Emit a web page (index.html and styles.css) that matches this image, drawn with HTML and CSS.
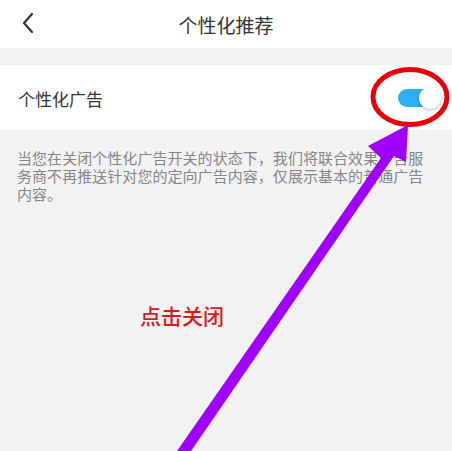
FILE: index.html
```html
<!DOCTYPE html>
<html lang="zh-CN">
<head>
<meta charset="utf-8">
<link rel="stylesheet" href="styles.css">
</head>
<body>
<div class="page">
  <header class="topbar">
    <span class="back">
      <svg width="14" height="22" viewBox="0 0 14 22"><path d="M11 2 L3 11 L11 20" fill="none" stroke="#333" stroke-width="2.2" stroke-linecap="round" stroke-linejoin="round"/></svg>
    </span>
    <h1 class="title">个性化推荐</h1>
  </header>
  <div class="gap"></div>
  <div class="row">
    <span class="label">个性化广告</span>
    <span class="switch"><span class="knob"></span></span>
  </div>
  <p class="desc">当您在关闭个性化广告开关的状态下，我们将联合效果广告服务商不再推送针对您的定向广告内容，仅展示基本的普通广告内容。</p>

  <div class="note">点击关闭</div>
  <svg class="overlay" width="452" height="451" viewBox="0 0 452 451">
    <ellipse cx="410" cy="97" rx="37" ry="27.5" fill="none" stroke="#e8000b" stroke-width="5"/>
    <polygon points="177,451 381,158 368,146 408,125 406,162 394,156 191,451" fill="#a100ff"/>
  </svg>
</div>
</body>
</html>
```

FILE: styles.css
```css
* { box-sizing: border-box; }
html, body { margin: 0; padding: 0; }
body {
  width: 452px;
  height: 451px;
  overflow: hidden;
  background: #f2f2f2;
  font-family: "Noto Sans CJK SC", "Noto Sans", sans-serif;
}
.page {
  position: relative;
  width: 452px;
  height: 451px;
}
.topbar {
  height: 48px;
  background: #fff;
  display: flex;
  align-items: center;
  justify-content: center;
  position: relative;
}
.back {
  position: absolute;
  left: 21px;
  top: 12px;
  display: flex;
}
.title {
  margin: 0;
  font-size: 19px;
  font-weight: 400;
  color: #333;
  line-height: 1;
}
.gap { height: 17px; }
.row {
  height: 65px;
  background: #fff;
  display: flex;
  align-items: center;
  justify-content: space-between;
  padding: 0 14px 0 18px;
}
.label {
  font-size: 17px;
  color: #333;
  margin-top: 2px;
}
.switch {
  position: relative;
  width: 40px;
  height: 18px;
  border-radius: 9px;
  background: #2eaef5;
  margin-top: 1px;
}
.knob {
  position: absolute;
  right: -3px;
  top: -2px;
  width: 22px;
  height: 22px;
  border-radius: 50%;
  background: #fff;
  box-shadow: 0 1px 3px rgba(0,0,0,0.3);
}
.desc {
  margin: 0;
  padding: 19px 20px 0 17px;
  font-size: 15px;
  line-height: 18px;
  color: #858585;
  letter-spacing: 0.05px;
}
.note {
  position: absolute;
  left: 140px;
  top: 302px;
  font-size: 21px;
  line-height: 26px;
  color: #e3161b;
  font-weight: 500;
}
.overlay {
  position: absolute;
  left: 0;
  top: 0;
}
```
